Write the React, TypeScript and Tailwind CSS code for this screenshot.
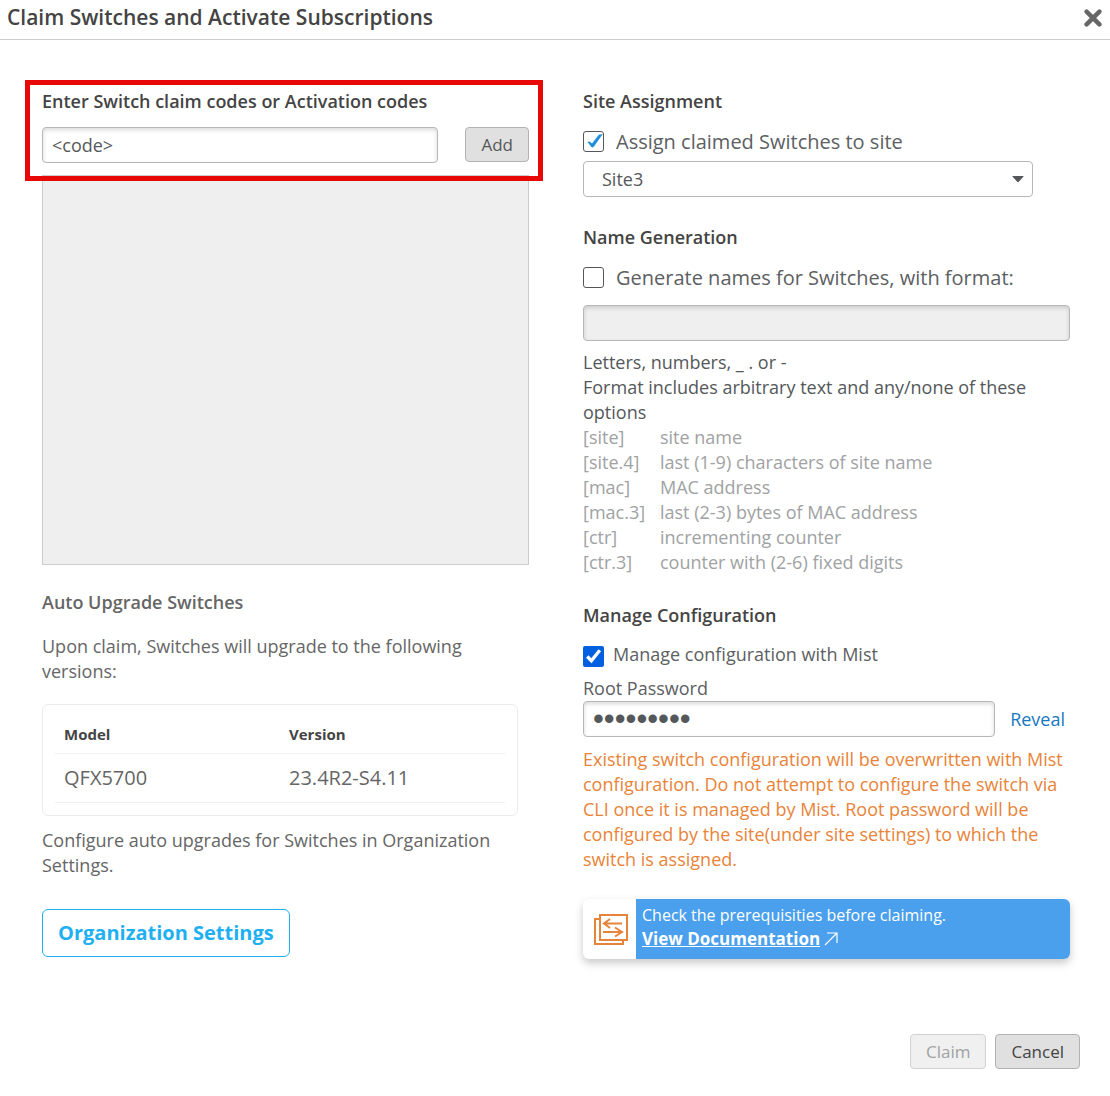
import React, { useState } from 'react';

const formatOptions = [
    { token: '[site]', description: 'site name' },
    { token: '[site.4]', description: 'last (1-9) characters of site name' },
    { token: '[mac]', description: 'MAC address' },
    { token: '[mac.3]', description: 'last (2-3) bytes of MAC address' },
    { token: '[ctr]', description: 'incrementing counter' },
    { token: '[ctr.3]', description: 'counter with (2-6) fixed digits' },
];

const versions = [{ model: 'QFX5700', version: '23.4R2-S4.11' }];

const inputClass =
    'h-9 min-w-0 rounded-[4px] border border-[#b5b8ba] px-[9px] text-[#54585a] shadow-[inset_0_2px_4px_rgba(0,0,0,0.15)] outline-none';
const headingClass = 'text-lg leading-[25px] font-semibold text-[#444444]';
const buttonClass = 'h-[35px] rounded-[4px] border px-[15px] text-[17px]';

interface CheckOptionProps {
    label: string;
    checked: boolean;
    onChange: (value: boolean) => void;
}

// Outlined tick box, the mark is drawn over the native input
const CheckOption: React.FC<CheckOptionProps> = ({ label, checked, onChange }) => (
    <label className="mt-3.5 flex h-[27px] items-center gap-3 text-xl text-[#5c6062]">
        <span className="relative flex">
            <input
                type="checkbox"
                checked={checked}
                onChange={(e) => onChange(e.target.checked)}
                className="size-[21px] appearance-none rounded-[3px] border border-[#54585a] bg-white"
            />
            {checked && (
                <svg className="pointer-events-none absolute inset-0" width="21" height="21" viewBox="0 0 21 21">
                    <path d="M4.4 10.8 Q6.6 9.6 9 12.6 L15.8 3.8 Q17 3 19.6 3.2 L11 15.6 Q9.4 17.4 7.8 15.2 Z" fill="#1e8fdb" />
                </svg>
            )}
        </span>
        {label}
    </label>
);

const ClaimCodes: React.FC = () => {
    const [code, setCode] = useState('<code>');

    return (
        <section>
            <div className="relative">
                <div className="pointer-events-none absolute -top-[9px] -right-[14px] -bottom-[18px] -left-[17px] border-[5px] border-[#e90808]"></div>
                <label htmlFor="claim-code" className={`block ${headingClass}`}>
                    Enter Switch claim codes or Activation codes
                </label>
                <div className="mt-[13px] flex items-start gap-[27px]">
                    <input
                        id="claim-code"
                        type="text"
                        value={code}
                        onChange={(e) => setCode(e.target.value)}
                        className={`flex-1 bg-white text-lg ${inputClass}`}
                    />
                    <button type="button" className={`border-[#b0b2b3] bg-[#e0e0e0] text-[#54585a] ${buttonClass}`}>
                        Add
                    </button>
                </div>
            </div>
            <div className="mt-3 h-[390px] border border-[#cbcccd] bg-[#efefef]"></div>
        </section>
    );
};

const AutoUpgrade: React.FC = () => (
    <section className="mt-[25px] text-lg leading-[25px] text-[#666666]">
        <h2 className="font-semibold">Auto Upgrade Switches</h2>
        <p className="mt-[19px]">Upon claim, Switches will upgrade to the following versions:</p>
        <div className="mt-5 mr-[11px] rounded-md border border-[#ebebeb] px-3 pt-[11px] pb-3">
            <table className="w-full table-fixed text-left">
                <thead>
                    <tr className="h-[37px] border-b border-[#f1f1f1] text-[15px] text-[#444444]">
                        <th className="px-[9px] font-bold">Model</th>
                        <th className="px-[9px] font-bold">Version</th>
                    </tr>
                </thead>
                <tbody>
                    {versions.map((row) => (
                        <tr key={row.model} className="h-[49px] border-b border-[#f1f1f1] text-xl">
                            <td className="px-[9px]">{row.model}</td>
                            <td className="px-[9px]">{row.version}</td>
                        </tr>
                    ))}
                </tbody>
            </table>
        </div>
        <p className="mt-3">Configure auto upgrades for Switches in Organization Settings.</p>
        <button
            type="button"
            className="mt-[31px] h-12 rounded-md border border-[#1fb0f2] bg-white px-[15px] text-xl font-bold text-[#1fb0f2]"
        >
            Organization Settings
        </button>
    </section>
);

const SiteAssignment: React.FC = () => {
    const [assign, setAssign] = useState(true);

    return (
        <section>
            <h2 className={headingClass}>Site Assignment</h2>
            <CheckOption label="Assign claimed Switches to site" checked={assign} onChange={setAssign} />
            <div className="relative mt-1.5 mr-[37px]">
                <select
                    aria-label="Site"
                    className="block h-9 w-full appearance-none rounded-[4px] border border-[#b5b8ba] bg-white px-[18px] text-lg text-[#54585a]"
                >
                    <option>Site3</option>
                </select>
                <svg className="pointer-events-none absolute top-[15px] right-[9px]" width="12" height="7" viewBox="0 0 12 7">
                    <path d="M1 0 H11 Q12 0 11.4 .8 L7 5.6 Q6 6.6 5 5.6 L.6 .8 Q0 0 1 0 Z" fill="#54585a" />
                </svg>
            </div>
        </section>
    );
};

const NameGeneration: React.FC = () => {
    const [generate, setGenerate] = useState(false);

    return (
        <section className="mt-7">
            <h2 className={headingClass}>Name Generation</h2>
            <CheckOption label="Generate names for Switches, with format:" checked={generate} onChange={setGenerate} />
            <input
                type="text"
                aria-label="Name format"
                disabled={!generate}
                className={`mt-3.5 block w-full bg-[#efefef] text-lg ${inputClass}`}
            />
            <div className="mt-[9px] text-lg leading-[25px] text-[#54585a]">
                <p>Letters, numbers, _ . or -</p>
                <p>Format includes arbitrary text and any/none of these options</p>
                <dl className="grid grid-cols-[77px_1fr] text-[#a0a2a3]">
                    {formatOptions.map((option) => (
                        <React.Fragment key={option.token}>
                            <dt>{option.token}</dt>
                            <dd>{option.description}</dd>
                        </React.Fragment>
                    ))}
                </dl>
            </div>
        </section>
    );
};

const ManageConfiguration: React.FC = () => {
    const [managed, setManaged] = useState(true);
    const [password, setPassword] = useState('password1');
    const [revealed, setRevealed] = useState(false);

    const passwordFont = revealed ? 'text-lg' : "font-['Liberation_Sans',sans-serif] text-[31px]";

    return (
        <section className="mt-7">
            <h2 className={headingClass}>Manage Configuration</h2>
            <label className="mt-3.5 flex h-[25px] items-end gap-[9px] text-lg leading-[25px] text-[#5c6062]">
                <input
                    type="checkbox"
                    checked={managed}
                    onChange={(e) => setManaged(e.target.checked)}
                    className="size-[21px] accent-[#0060df]"
                />
                Manage configuration with Mist
            </label>
            <label htmlFor="root-password" className="mt-[9px] block text-lg leading-[25px] text-[#5c6062]">
                Root Password
            </label>
            <div className="flex items-center gap-[15px] pr-[5px]">
                <input
                    id="root-password"
                    type={revealed ? 'text' : 'password'}
                    value={password}
                    onChange={(e) => setPassword(e.target.value)}
                    className={`flex-1 bg-white ${passwordFont} ${inputClass}`}
                />
                <button type="button" onClick={() => setRevealed(!revealed)} className="text-lg text-[#1878c2]">
                    Reveal
                </button>
            </div>
            <p className="mt-2.5 text-lg leading-[25px] text-[#e88439]">
                Existing switch configuration will be overwritten with Mist configuration. Do not attempt to configure the
                switch via CLI once it is managed by Mist. Root password will be configured by the site(under site settings)
                to which the switch is assigned.
            </p>
        </section>
    );
};

const Prerequisites: React.FC = () => (
    <aside className="mt-[27px] flex h-[60px] overflow-hidden rounded-md bg-white shadow-[0_4px_8px_rgba(0,0,0,0.22)]">
        <div className="flex w-[53px] shrink-0 items-center pl-[11px]">
            <svg width="34" height="31" viewBox="0 0 34 31" fill="none" stroke="#e88439" strokeWidth="2">
                <path d="M5 5 H1 V30 H29 V26" />
                <path d="M6 1 H33 V26 H6 Z" />
                <path d="M28 9.5 H10 M16 5 L10 9.5 L16 14" />
                <path d="M9 18 H28 M21 13.5 L28 18 L21 22.5" />
            </svg>
        </div>
        <div className="flex-1 bg-[#4aa0ec] px-1.5 pt-[5px] leading-[23px] text-white">
            <p className="text-base leading-[23px]">Check the prerequisities before claiming.</p>
            <a href="#docs" className="flex w-fit items-center gap-1 text-[17px] font-bold">
                <span className="underline">View Documentation</span>
                <svg width="14" height="14" viewBox="0 0 14 14" fill="none" stroke="currentColor" strokeWidth="1.2">
                    <path d="M1 13 L13 1 M3 1 H13 V11" />
                </svg>
            </a>
        </div>
    </aside>
);

const App: React.FC = () => (
    <div className="bg-white font-['Open_Sans','Noto_Sans',sans-serif]">
        <header className="flex h-10 items-center justify-between border-b border-[#cccccc] pr-2 pb-1 pl-[7px]">
            <h1 className="text-[21px] font-semibold text-[#444444]">Claim Switches and Activate Subscriptions</h1>
            <button type="button" aria-label="Close">
                <svg width="18" height="18" viewBox="0 0 18 18" stroke="#666666" strokeWidth="4.4" strokeLinecap="round">
                    <path d="M2.6 2.6 L15.4 15.4 M15.4 2.6 L2.6 15.4" />
                </svg>
            </button>
        </header>
        <main className="grid grid-cols-2 gap-x-[54px] pt-[49px] pr-10 pl-[42px]">
            <div>
                <ClaimCodes />
                <AutoUpgrade />
            </div>
            <div>
                <SiteAssignment />
                <NameGeneration />
                <ManageConfiguration />
                <Prerequisites />
            </div>
        </main>
        <footer className="mt-[75px] flex justify-end gap-[9px] pr-[30px] pb-[27px]">
            <button type="button" disabled className={`border-[#d0d1d2] bg-[#f0f0f0] text-[#a0a2a3] ${buttonClass}`}>
                Claim
            </button>
            <button type="button" className={`border-[#b0b2b3] bg-[#e0e0e0] text-[#444444] ${buttonClass}`}>
                Cancel
            </button>
        </footer>
    </div>
);

export default App;
